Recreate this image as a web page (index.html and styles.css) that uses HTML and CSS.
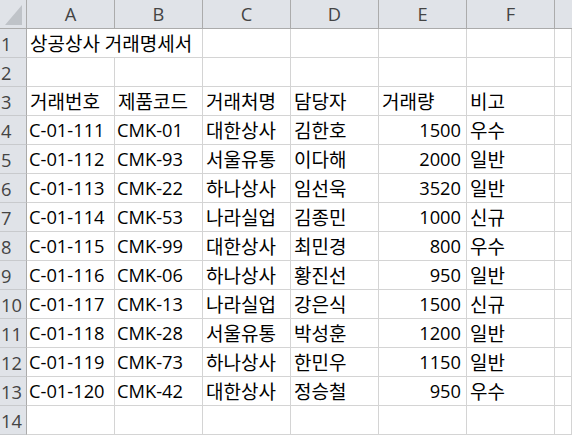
FILE: index.html
```html
<!DOCTYPE html>
<html lang="ko">
<head>
<meta charset="utf-8">
<title>상공상사 거래명세서</title>
<link rel="stylesheet" href="styles.css">
</head>
<body>
<div class="sheet">
  <div class="corner"><span class="tri"></span></div>
  <div class="ch">A</div><div class="ch">B</div><div class="ch">C</div><div class="ch">D</div><div class="ch">E</div><div class="ch">F</div><div class="ch last"></div>

  <div class="rh">1</div><div class="c ko span2">상공상사 거래명세서</div><div class="c"></div><div class="c"></div><div class="c"></div><div class="c"></div><div class="c"></div>
  <div class="rh">2</div><div class="c"></div><div class="c"></div><div class="c"></div><div class="c"></div><div class="c"></div><div class="c"></div><div class="c"></div>
  <div class="rh">3</div><div class="c ko">거래번호</div><div class="c ko">제품코드</div><div class="c ko">거래처명</div><div class="c ko">담당자</div><div class="c ko">거래량</div><div class="c ko">비고</div><div class="c"></div>
  <div class="rh">4</div><div class="c">C-01-111</div><div class="c">CMK-01</div><div class="c ko">대한상사</div><div class="c ko">김한호</div><div class="c num">1500</div><div class="c ko">우수</div><div class="c"></div>
  <div class="rh">5</div><div class="c">C-01-112</div><div class="c">CMK-93</div><div class="c ko">서울유통</div><div class="c ko">이다해</div><div class="c num">2000</div><div class="c ko">일반</div><div class="c"></div>
  <div class="rh">6</div><div class="c">C-01-113</div><div class="c">CMK-22</div><div class="c ko">하나상사</div><div class="c ko">임선욱</div><div class="c num">3520</div><div class="c ko">일반</div><div class="c"></div>
  <div class="rh">7</div><div class="c">C-01-114</div><div class="c">CMK-53</div><div class="c ko">나라실업</div><div class="c ko">김종민</div><div class="c num">1000</div><div class="c ko">신규</div><div class="c"></div>
  <div class="rh">8</div><div class="c">C-01-115</div><div class="c">CMK-99</div><div class="c ko">대한상사</div><div class="c ko">최민경</div><div class="c num">800</div><div class="c ko">우수</div><div class="c"></div>
  <div class="rh">9</div><div class="c">C-01-116</div><div class="c">CMK-06</div><div class="c ko">하나상사</div><div class="c ko">황진선</div><div class="c num">950</div><div class="c ko">일반</div><div class="c"></div>
  <div class="rh">10</div><div class="c">C-01-117</div><div class="c">CMK-13</div><div class="c ko">나라실업</div><div class="c ko">강은식</div><div class="c num">1500</div><div class="c ko">신규</div><div class="c"></div>
  <div class="rh">11</div><div class="c">C-01-118</div><div class="c">CMK-28</div><div class="c ko">서울유통</div><div class="c ko">박성훈</div><div class="c num">1200</div><div class="c ko">일반</div><div class="c"></div>
  <div class="rh">12</div><div class="c">C-01-119</div><div class="c">CMK-73</div><div class="c ko">하나상사</div><div class="c ko">한민우</div><div class="c num">1150</div><div class="c ko">일반</div><div class="c"></div>
  <div class="rh">13</div><div class="c">C-01-120</div><div class="c">CMK-42</div><div class="c ko">대한상사</div><div class="c ko">정승철</div><div class="c num">950</div><div class="c ko">우수</div><div class="c"></div>
  <div class="rh">14</div><div class="c"></div><div class="c"></div><div class="c"></div><div class="c"></div><div class="c"></div><div class="c"></div><div class="c"></div>
</div>
</body>
</html>
```
FILE: styles.css
```css
html, body {
  margin: 0;
  padding: 0;
  background: #ffffff;
}

.sheet {
  display: grid;
  grid-template-columns: 27px repeat(6, 88px) 1fr;
  grid-template-rows: repeat(15, 29px);
  width: 572px;
  height: 435px;
  overflow: hidden;
  font-family: "Open Sans", "Noto Sans CJK KR", sans-serif;
  font-size: 18.3px;
  color: #000000;
}

.sheet > div {
  box-sizing: border-box;
  white-space: nowrap;
  overflow: hidden;
}

.corner {
  background: #e0e3e8;
  border-right: 1px solid #ababab;
  border-bottom: 1px solid #ababab;
  display: flex;
  align-items: flex-end;
  justify-content: flex-end;
  padding: 0 4px 3px 0;
}

.tri {
  display: block;
  width: 0;
  height: 0;
  border-left: 17px solid transparent;
  border-bottom: 20px solid #bfc3c8;
}

.ch {
  background: #e0e3e8;
  border-right: 1px solid #ababab;
  border-bottom: 1px solid #ababab;
  color: #444444;
  display: flex;
  align-items: center;
  justify-content: center;
  padding-bottom: 1px;
}

.ch.last {
  border-right: none;
}

.sheet > .rh {
  background: #e0e3e8;
  border-right: 1px solid #ababab;
  border-bottom: 1px solid #c8cacd;
  color: #444444;
  display: flex;
  align-items: center;
  justify-content: flex-start;
  padding-left: 1px;
  overflow: visible;
}

.c {
  border-right: 1px solid #d4d4d4;
  border-bottom: 1px solid #d4d4d4;
  display: flex;
  align-items: center;
  padding: 0 3px 1px 2px;
}

.c.ko {
  font-size: 19px;
  padding-left: 3px;
}

.c.num {
  justify-content: flex-end;
  padding-right: 5px;
}

.c.span2 {
  grid-column: span 2;
}
```
